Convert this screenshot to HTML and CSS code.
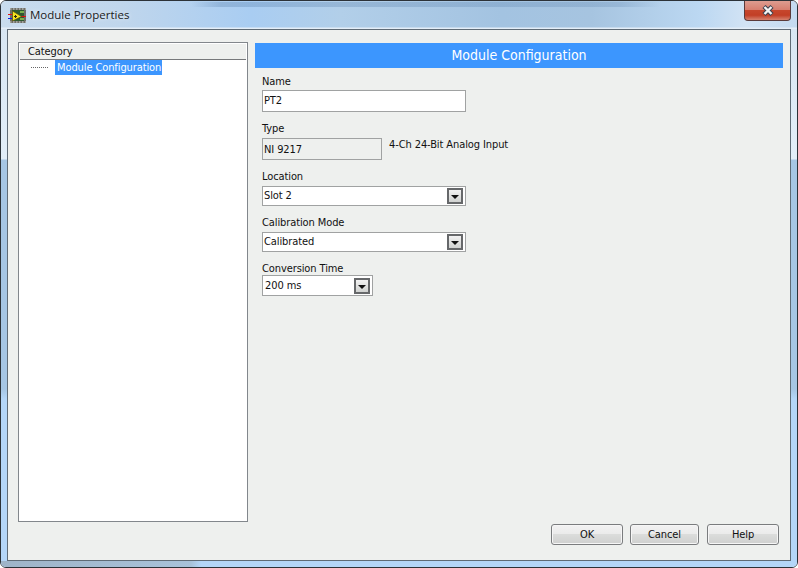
FILE: index.html
```html
<!DOCTYPE html>
<html lang="en">
<head>
<meta charset="utf-8">
<title>Module Properties</title>
<link rel="stylesheet" href="styles.css">
</head>
<body>
<div class="window">
  <div class="titlebar">
    <svg class="app-icon" width="19" height="17" viewBox="0 0 19 17">
      <rect x="2" y="0" width="16" height="15" fill="#6e6e68"/>
      <path d="M2 1h16M2 14h16" stroke="#d8d8d0" stroke-width="1" stroke-dasharray="1.500 1.500"/>
      <rect x="4" y="2" width="12" height="11" fill="#2e5a30"/>
      <path d="M12 3h4v2h-4zM12 10h4v2h-4z" fill="#7cb050"/>
      <path d="M0 6.500h6" stroke="#e01010" stroke-width="1"/>
      <path d="M0 10.500h6" stroke="#1020e0" stroke-width="1"/>
      <path d="M13 8.500h5" stroke="#e01010" stroke-width="1"/>
      <path d="M4.500 3L13.500 8.500L4.500 13Z" fill="#f4e420" stroke="#5a5010" stroke-width=".7"/>
      <path d="M6 8.500h3M7.500 7v3" stroke="#302a08" stroke-width="1"/>
    </svg>
    <span class="title">Module Properties</span>
    <button class="close" type="button" aria-label="Close">
      <svg width="14" height="11" viewBox="0 0 14 11">
        <path d="M3 1.500L11 9.500M11 1.500L3 9.500" fill="none" stroke="#3c4250" stroke-width="4.400"/>
        <path d="M3.500 2L10.500 9M10.500 2L3.500 9" fill="none" stroke="#f4f4f4" stroke-width="2.400"/>
      </svg>
    </button>
  </div>
  <div class="frame">
    <div class="client">
      <section class="tree">
        <div class="tree-head">Category</div>
        <div class="tree-row">
          <span class="dots"></span>
          <span class="tree-item">Module Configuration</span>
        </div>
      </section>
      <section class="panel">
        <h1 class="banner">Module Configuration</h1>
        <div class="form">
          <div class="field field-name">
            <label class="label">Name</label>
            <div class="box box-wide box-tall">PT2</div>
          </div>
          <div class="field">
            <label class="label label-mid">Type</label>
            <div class="type-row">
              <div class="box box-mid box-tall box-grey">NI 9217</div>
              <span class="type-desc">4-Ch 24-Bit Analog Input</span>
            </div>
          </div>
          <div class="field">
            <label class="label label-mid">Location</label>
            <div class="box box-wide combo"><span class="combo-text">Slot 2</span><span class="arrow"></span></div>
          </div>
          <div class="field">
            <label class="label label-mid">Calibration Mode</label>
            <div class="box box-wide combo"><span class="combo-text">Calibrated</span><span class="arrow"></span></div>
          </div>
          <div class="field">
            <label class="label label-tight">Conversion Time</label>
            <div class="box box-small combo"><span>200 ms</span><span class="arrow"></span></div>
          </div>
        </div>
        <div class="actions">
          <button class="btn btn-ok" type="button">OK</button>
          <button class="btn btn-cancel" type="button">Cancel</button>
          <button class="btn btn-help" type="button">Help</button>
        </div>
      </section>
    </div>
  </div>
</div>
</body>
</html>
```
FILE: styles.css
```css
* { box-sizing: border-box; }
html, body { margin: 0; padding: 0; }
body {
  width: 798px;
  height: 568px;
  overflow: hidden;
  background: #fff;
  font-family: "DejaVu Sans Condensed", "DejaVu Sans", sans-serif;
  font-stretch: condensed;
  font-size: 11px;
  letter-spacing: -0.1px;
  color: #111;
}
.window {
  width: 798px;
  height: 568px;
  display: flex;
  flex-direction: column;
  border: 1px solid #2c3238;
  border-radius: 6px;
  overflow: hidden;
}
.titlebar {
  height: 28px;
  flex: none;
  display: flex;
  align-items: flex-start;
  padding: 0 6px;
  background:
    linear-gradient(180deg, rgba(228,238,248,0) 26px, #e4eef8 27px),
    linear-gradient(90deg, rgba(80,120,165,0) 190px, rgba(80,120,165,.3) 220px, rgba(80,120,165,.25) 480px, rgba(80,120,165,.22) 620px, rgba(80,120,165,0) 660px) 0 1px / 100% 5px no-repeat,
    linear-gradient(90deg, #c9dcee 0, #c0d6ec 120px, #a9cdf2 250px, #b2cfe9 340px, #a3c3e1 500px, #a6c4e0 590px, #bcd8f2 700px, #d2e3f4 745px, #c4daf0 100%);
}
.app-icon { margin: 7px 0 0 1px; flex: none; }
.title {
  margin: 6px 0 0 3px;
  font-family: "Open Sans", sans-serif;
  font-stretch: normal;
  font-size: 11.500px;
  letter-spacing: 0;
  line-height: 16px;
  color: #1a1a1a;
  text-shadow: 0 0 4px rgba(255,255,255,.8);
}
.close {
  margin-left: auto;
  width: 47px;
  height: 20px;
  padding: 0;
  border: 1px solid #5a3a3a;
  border-top: 0;
  border-radius: 0 0 4px 4px;
  display: flex;
  align-items: center;
  justify-content: center;
  background: linear-gradient(180deg, #dd9c90 0, #d77f70 45%, #c6462c 50%, #c23f26 75%, #d5826f 100%);
}
.frame {
  flex: 1;
  display: flex;
  padding: 0 6px 6px;
  background:
    linear-gradient(90deg, #9fb4c8 0, #a8c2da 190px, #b4d6f8 200px, #b4d6f8 100%) 0 100% / 100% 6px no-repeat,
    linear-gradient(180deg, #d8e6f2 0, #e2eef8 130px, #a6c6e4 131px, #a6c6e4 360px, #b4d6f8 370px, #b4d6f8 100%);
}
.client {
  flex: 1;
  display: flex;
  gap: 7px;
  border: 1px solid #5f6b76;
  background: #eef0ee;
  padding: 12px 7px 15px 10px;
}
.tree {
  width: 230px;
  height: 480px;
  flex: none;
  background: #fff;
  border: 1px solid #82878c;
  padding: 1px 1px 0 1px;
}
.tree-head {
  height: 16px;
  line-height: 15px;
  padding-left: 8px;
  background: #eef0ee;
  border-bottom: 1px solid #77797b;
}
.tree-row {
  height: 15px;
  display: flex;
  align-items: center;
  padding-left: 11px;
}
.dots {
  width: 17px;
  height: 0;
  border-top: 1px dotted #666;
  margin-right: 7px;
}
.tree-item {
  background: #3c96fe;
  color: #fff;
  line-height: 15px;
  padding: 0 1px 0 2px;
}
.panel {
  flex: 1;
  display: flex;
  flex-direction: column;
  padding-top: 1px;
}
.banner {
  margin: 0;
  height: 25px;
  flex: none;
  background: #3c96fe;
  color: #fff;
  font-size: 14px;
  font-weight: 400;
  letter-spacing: 0;
  line-height: 25px;
  text-align: center;
}
.form {
  flex: 1;
  padding-left: 7px;
}
.field { display: flex; flex-direction: column; margin-top: 9px; }
.field-name { margin-top: 6px; }
.label {
  height: 16px;
  line-height: 16px;
}
.label-mid { height: 17px; }
.label-tight { height: 14px; }
.box {
  background: #fff;
  border: 1px solid #a0a2a2;
  padding-left: 1px;
  height: 20px;
  line-height: 17px;
  flex: none;
}
.box-tall { height: 22px; line-height: 19px; }
.box-wide { width: 204px; }
.box-mid { width: 120px; }
.box-small { width: 111px; height: 21px; padding-left: 2px; }
.box-grey { background: #eef0ee; line-height: 21px; }
.type-row { display: flex; align-items: flex-start; gap: 7px; }
.type-desc { line-height: 14px; }
.combo {
  display: flex;
  align-items: center;
  justify-content: space-between;
  padding-right: 2px;
}
.combo-text { margin-bottom: 2px; }
.arrow {
  width: 16px;
  height: 16px;
  flex: none;
  border: 2px solid #66686a;
  background: linear-gradient(180deg, #f2f2f2, #d0d2d0);
  position: relative;
}
.arrow::after {
  content: "";
  position: absolute;
  left: 2px;
  top: 5px;
  border-left: 4px solid transparent;
  border-right: 4px solid transparent;
  border-top: 4px solid #111;
}
.actions {
  display: flex;
  justify-content: flex-end;
  padding-right: 4px;
  flex: none;
}
.btn {
  height: 21px;
  padding: 0;
  border: 1px solid #7a7c7e;
  border-radius: 3px;
  font: inherit;
  letter-spacing: inherit;
  color: #111;
  background: linear-gradient(180deg, #f2f2f2 0, #ebebeb 45%, #dbdcdb 50%, #cfd0cf 100%);
  box-shadow: inset 0 0 0 1px #f6f6f6;
}
.btn-ok { width: 72px; }
.btn-cancel { width: 69px; margin-left: 7px; }
.btn-help { width: 72px; margin-left: 8px; }
```
